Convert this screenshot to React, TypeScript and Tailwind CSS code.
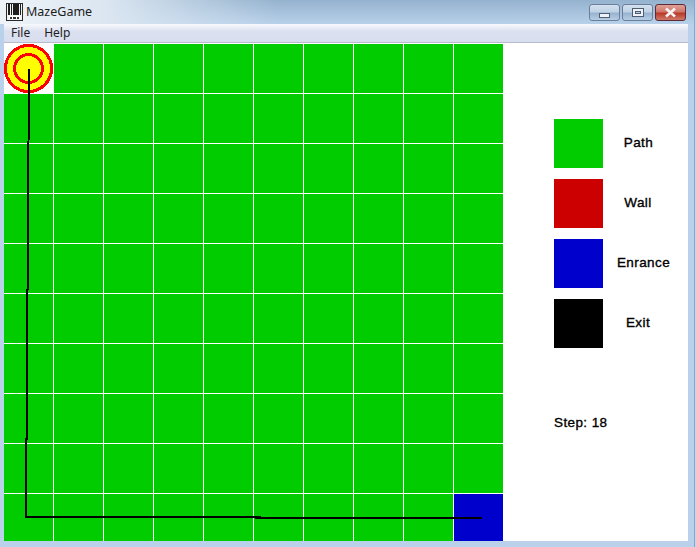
const legend = [
  { name: "Path", color: "bg-[#00cc00]", shift: "pl-[1px]" },
  { name: "Wall", color: "bg-[#cc0000]", shift: "pl-0" },
  { name: "Enrance", color: "bg-[#0000cc]", shift: "pl-[11px]" },
  { name: "Exit", color: "bg-black", shift: "pl-0" },
];

const cells = Array.from({ length: 100 }, (_, i) => i);

const WindowIcon = () => (
  <svg width="17" height="18" viewBox="0 0 17 18" className="shrink-0" shapeRendering="crispEdges">
    <rect x="0.5" y="0.5" width="16" height="17" fill="#f4f4f4" stroke="#2a2a2a" />
    <path d="M3 1v11M5.5 1v11M8 1v11M10 1v11M12 1v11M14.5 1v11" stroke="#1e1e1e" strokeWidth="1.4" />
    <path d="M3 13h11v3h-11z" fill="#fff" />
    <path d="M4 14h2v2h-2zM7 14h3v2h-3zM11 14h2v2h-2z" fill="#333" />
  </svg>
);

const CaptionButton = ({ kind }: { kind: "min" | "max" | "close" }) => {
  if (kind === "close") {
    return (
      <div className="flex h-[17px] w-[31px] items-center justify-center rounded-[3px] border border-[#5d2a35] bg-[linear-gradient(#e0a097_0%,#d0766a_45%,#b8392a_55%,#cf7a6a_100%)]">
        <svg width="13" height="11" viewBox="0 0 13 11">
          <path d="M2 1.5l9 8M11 1.5l-9 8" stroke="#f4f4f4" strokeWidth="2.6" />
        </svg>
      </div>
    );
  }
  return (
    <div className="flex h-[17px] w-[31px] items-center justify-center rounded-[3px] border border-[#6b7f99] bg-[linear-gradient(#d3e1f0_0%,#c0d2e6_45%,#98b3d1_55%,#b6cde4_100%)]">
      {kind === "min" ? (
        <div className="mt-[6px] h-[5px] w-[11px] border border-[#4d5d72] bg-[#eef2f6]" />
      ) : (
        <div className="flex h-[9px] w-[12px] items-center justify-center border border-[#4d5d72] bg-[#eef2f6]">
          <div className="h-[3px] w-[6px] border border-[#4d5d72] bg-[#b6cde4]" />
        </div>
      )}
    </div>
  );
};

const Maze = () => (
  <div className="relative h-[498px] w-[499px] shrink-0 overflow-hidden bg-white pt-px">
    <div className="grid grid-cols-[repeat(10,49px)] grid-rows-[repeat(10,49px)] gap-px">
      {cells.map((i) => (
        <div
          key={i}
          className={i === 0 ? "bg-white" : i === 99 ? "bg-[#0000cc]" : "bg-[#00cc00]"}
        />
      ))}
    </div>
    <svg width="499" height="498" className="absolute left-0 top-0" shapeRendering="crispEdges">
      <circle cx="24.5" cy="25.5" r="23" fill="#ffff00" stroke="#ff0000" strokeWidth="3" />
      <circle cx="24.5" cy="25.5" r="14" fill="none" stroke="#ff0000" strokeWidth="3" />
      <path d="M25 26L22 474L478 475" fill="none" stroke="#000" strokeWidth="2" />
    </svg>
  </div>
);

export default function App() {
  return (
    <div className="relative h-[547px] w-[695px] overflow-hidden bg-[#b9d1ea] [font-family:'Liberation_Sans',sans-serif]">
      <div className="flex h-[24px] items-center bg-[linear-gradient(90deg,#eef3f8_0%,#dbe6f1_15%,rgba(219,230,241,0)_40%),linear-gradient(#95b2ce,#b8d1ea)] pl-[6px] pr-[9px]">
        <WindowIcon />
        <span className="ml-[3px] text-[12.5px] text-[#1c1c1c] [font-family:'Noto_Sans',sans-serif]">MazeGame</span>
        <div className="ml-auto mt-px flex gap-[2px]">
          <CaptionButton kind="min" />
          <CaptionButton kind="max" />
          <CaptionButton kind="close" />
        </div>
      </div>
      <div className="mx-[4px] flex h-[19px] w-[684px] items-center gap-[14px] border-b border-[#b5bccf] bg-[linear-gradient(#f8f9fd_0%,#dce1f1_40%,#d9deee_100%)] pl-[7px] text-[12px] text-[#1e1e1e] [font-family:'Noto_Sans',sans-serif]">
        <span>File</span>
        <span>Help</span>
      </div>
      <div className="ml-[4px] flex h-[498px] w-[684px] bg-white">
        <Maze />
        <div className="flex flex-col pl-[51px] pt-[76px] text-[13.5px] tracking-[0.4px] text-black [-webkit-text-stroke:0.35px_black]">
          <div className="flex flex-col gap-[11px]">
            {legend.map((item) => (
              <div key={item.name} className="flex h-[49px] items-center">
                <div className={`h-[49px] w-[49px] ${item.color}`} />
                <span className={`mb-[1px] w-[70px] text-center ${item.shift}`}>{item.name}</span>
              </div>
            ))}
          </div>
          <div className="mt-[65px]">Step: 18</div>
        </div>
      </div>
      <div className="absolute right-0 top-0 h-full w-px bg-[#3fc4ee]" />
    </div>
  );
}
